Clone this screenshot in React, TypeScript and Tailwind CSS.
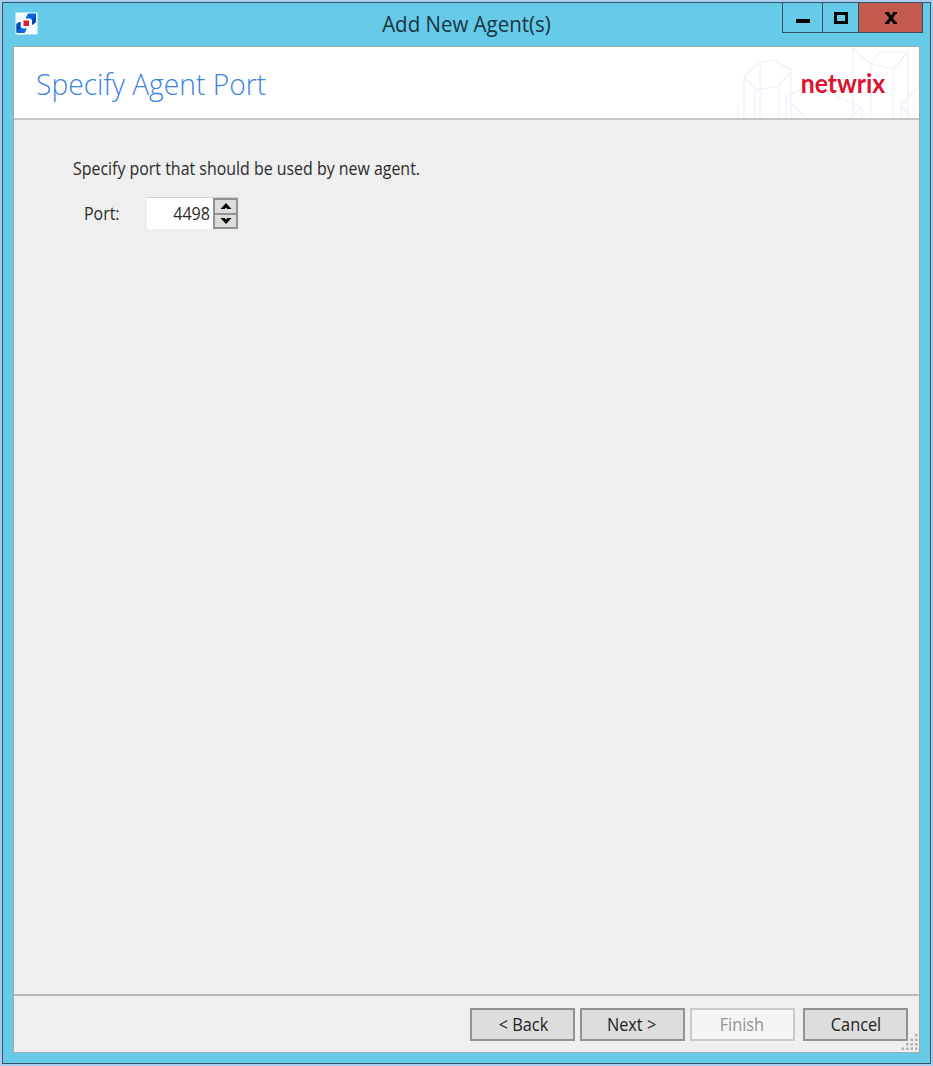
import React from "react";

function AppIcon() {
  return (
    <svg width="23" height="23" viewBox="0 0 23 23" aria-hidden="true">
      <rect x="0.5" y="0.5" width="22" height="22" fill="#f7fbff" />
      <path d="M13 1.5 H21 V10 L18 12.5 H17 V8 L15 6.5 H10.5 Z" fill="#0a66e0" />
      <path d="M21 2.5 V10 L18 12.5 H17 V7.5 Z" fill="#0848b8" />
      <path d="M1.5 12 L4.5 10 H5.5 V15 L7.5 16.5 H12 L9.5 21 H1.5 Z" fill="#0a66e0" />
      <path d="M1.5 12 L4.5 10 H5.5 V15.5 L2 20 H1.5 Z" fill="#0848b8" />
      <rect x="8.5" y="8.5" width="5.5" height="5.5" fill="#da1f30" />
    </svg>
  );
}

function HeaderArt() {
  return (
    <svg className="absolute right-0 top-0" width="199" height="71" viewBox="0 0 199 71" fill="none" stroke="#ebf0fa" strokeWidth="1.2" aria-hidden="true">
      <path d="M24 30 L39 16 L54 13 L71 23 V71 M24 30 L37 43 L58 39 L71 25 M24 30 V71 M35 43 V71 M59 39 V71 M40 17 V71 M18 58 V71" />
      <path d="M66 50 L89 37 L102 42 L142 61 L130 71 M66 50 V71 M66 52 L86 71 M142 61 V71" />
      <path d="M133 1 V71 M133 1 L151 17 L159 5 H188 L173 22 L151 17 V71 M173 22 V71 M188 5 V71" />
      <path d="M199 40 L181 58 L191 71 M181 58 V71" />
    </svg>
  );
}

function WizardButton({ label, nudge, disabled = false }: { label: string; nudge: string; disabled?: boolean }) {
  return (
    <button
      disabled={disabled}
      className={`flex h-[33px] w-[105px] items-center justify-center border-2 ${
        disabled ? "border-[#c7cbd0] bg-[#f4f4f4] text-[#939393]" : "border-[#929292] bg-[#dddddd] text-[#222222]"
      }`}
    >
      <span className={`scale-x-[0.93] whitespace-nowrap text-[17.5px] leading-none ${nudge}`}>{label}</span>
    </button>
  );
}

export default function App() {
  return (
    <div className="h-[1066px] w-[933px] bg-[#a9cdee] px-[2px] pt-[2px] pb-[2px] font-['Open_Sans','Noto_Sans',sans-serif]">
      <div className="flex h-[1062px] w-[929px] flex-col border-[1.5px] border-[#36536a] bg-[#66cae9]">
        <div className="flex h-[43px] shrink-0 items-start">
          <div className="w-[147px] pl-[12px] pt-[9px]"><AppIcon /></div>
          <div className="flex flex-1 justify-center pt-[7px] text-[#183642]">
            <span className="scale-x-[0.975] whitespace-nowrap text-[21px] leading-[28px]">Add New Agent(s)</span>
          </div>
          <div className="mr-[7px] flex h-[30px] w-[141px] border border-t-0 border-[#35515c]">
            <div className="flex w-[40px] items-center justify-center border-r border-[#35515c]">
              <div className="mt-[6px] h-[4px] w-[14px] bg-black" />
            </div>
            <div className="flex w-[36px] items-center justify-center border-r border-[#35515c]">
              <div className="h-[12px] w-[14px] border-[3px] border-black" />
            </div>
            <div className="flex flex-1 items-center justify-center bg-[#c3594f]">
              <svg width="14" height="12" viewBox="0 0 14 12" stroke="#000" strokeWidth="3" aria-hidden="true">
                <path d="M2.5 0 L11.5 12 M11.5 0 L2.5 12" />
                <path d="M1 1 H5 M9 1 H13 M1 11 H5 M9 11 H13" strokeWidth="2" />
              </svg>
            </div>
          </div>
        </div>
        <div className="mx-[10px] flex h-[1007px] flex-col border-[1.5px] border-[#a3aaac] bg-[#efefef]">
          <header className="relative flex h-[73px] shrink-0 items-center justify-between border-b-2 border-[#c6c6c6] bg-white pl-[22px] pr-[34px]">
            <HeaderArt />
            <h1 className="origin-left scale-x-[0.94] whitespace-nowrap pt-[3px] text-[30px] font-light leading-[40px] text-[#3c82df]">Specify Agent Port</h1>
            <span className="relative origin-right scale-x-[0.915] font-['Lato'] text-[27px] font-bold leading-[30px] text-[#dc1230]">netwrix</span>
          </header>
          <main className="flex-1 pl-[59px] pt-[36px] text-[#2b2b2b]">
            <p className="w-max origin-left scale-x-[0.91] text-[17.5px] leading-[24px]">Specify port that should be used by new agent.</p>
            <div className="mt-[17px] flex items-center">
              <label className="w-[74px] pl-[11px]"><span className="inline-block origin-left scale-x-[0.91] text-[17.5px]">Port:</span></label>
              <div className="flex h-[32px] w-[91px] border-t border-[#cfcfcf] bg-white">
                <div className="flex flex-1 items-center justify-end pr-[3px] text-[17.5px]"><span className="origin-right scale-x-[0.92]">4498</span></div>
                <div className="flex h-[31px] w-[25px] flex-col border-2 border-[#929292] bg-[#dddddd]">
                  <div className="flex flex-1 items-center justify-center border-b-2 border-[#929292]">
                    <svg width="12" height="6" viewBox="0 0 12 6" aria-hidden="true"><path d="M0.5 6 L6 0 L11.5 6 H7.5 L6 4.5 L4.5 6Z" /></svg>
                  </div>
                  <div className="flex flex-1 items-center justify-center">
                    <svg width="12" height="6" viewBox="0 0 12 6" aria-hidden="true"><path d="M0.5 0 L6 6 L11.5 0 H7.5 L6 1.5 L4.5 0Z" /></svg>
                  </div>
                </div>
              </div>
            </div>
          </main>
          <footer className="relative flex h-[58px] shrink-0 justify-end border-t-2 border-[#bcbcbc] pr-[11px] pt-[12px]">
            <div className="flex gap-[5px]">
              <WizardButton label="< Back" nudge="pl-[3px]" />
              <WizardButton label="Next >" nudge="pr-[3px]" />
              <WizardButton label="Finish" nudge="pr-[1px]" disabled />
            </div>
            <div className="ml-[8px]"><WizardButton label="Cancel" nudge="pl-[1px]" /></div>
            <svg className="absolute right-px bottom-px" width="17" height="17" viewBox="0 0 17 17" fill="#b2b2b2" aria-hidden="true">
              <path d="M14 0h2.5v2.5H14z M9.5 4.5H12V7H9.5z M14 4.5h2.5V7H14z M5 9h2.5v2.5H5z M9.5 9H12v2.5H9.5z M14 9h2.5v2.5H14z M.5 13.5H3V16H.5z M5 13.5h2.5V16H5z M9.5 13.5H12V16H9.5z M14 13.5h2.5V16H14z" />
            </svg>
          </footer>
        </div>
      </div>
    </div>
  );
}
